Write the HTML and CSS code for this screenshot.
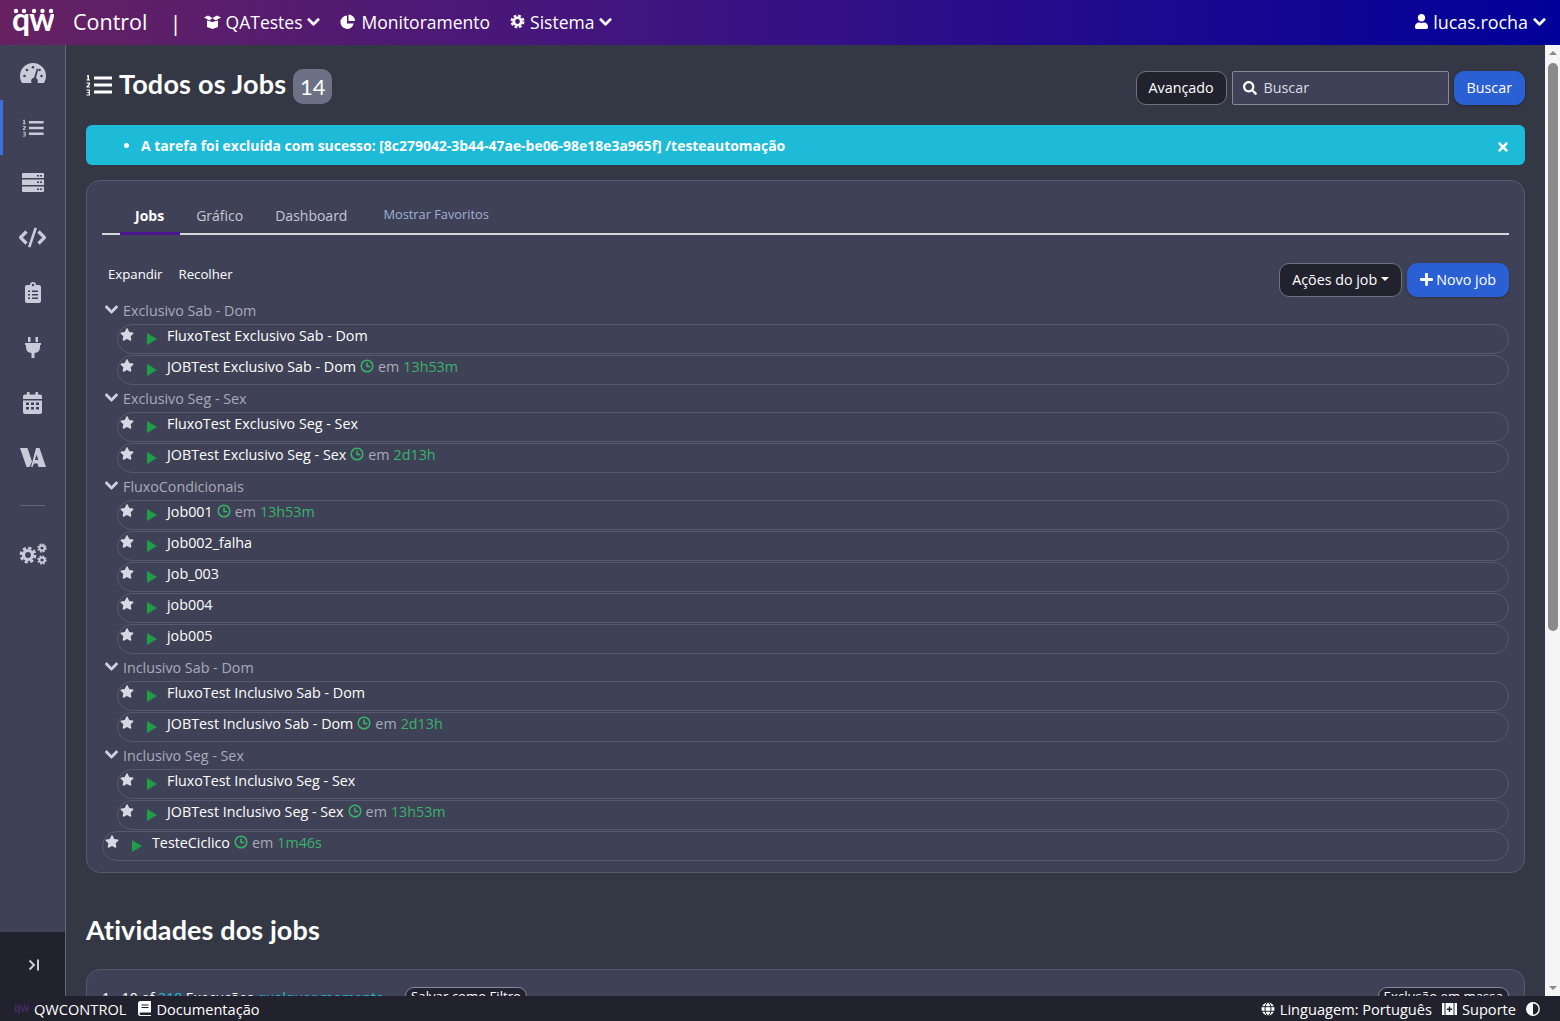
FILE: index.html
```html
<!DOCTYPE html>
<html lang="pt">

<head>
  <meta charset="UTF-8">
  <meta name="viewport" content="width=device-width, initial-scale=1.0">
  <title>QW Control</title>
  <link rel="stylesheet" href="styles.css">
</head>

<body>

  <!-- Shared icons -->
  <svg class="icon-defs" width="0" height="0">
    <symbol id="i-star" viewBox="0 0 576 512"><path d="M259.3 17.8L194 150.2 47.9 171.5c-26.2 3.8-36.7 36.1-17.7 54.6l105.7 103-25 145.5c-4.5 26.3 23.2 46 46.4 33.7L288 439.6l130.7 68.7c23.2 12.2 50.9-7.4 46.4-33.7l-25-145.5 105.7-103c19-18.5 8.5-50.8-17.7-54.6L382 150.2 316.7 17.8c-11.7-23.6-45.6-23.9-57.4 0z"/></symbol>
    <symbol id="i-chevron" viewBox="0 0 448 512"><path d="M207.029 381.476L12.686 187.132c-9.373-9.373-9.373-24.569 0-33.941l22.667-22.667c9.357-9.357 24.522-9.375 33.901-.04L224 284.505l154.745-154.021c9.379-9.335 24.544-9.317 33.901.04l22.667 22.667c9.373 9.373 9.373 24.569 0 33.941L240.971 381.476c-9.373 9.372-24.569 9.372-33.942 0z"/></symbol>
    <symbol id="i-play" viewBox="0 0 10 12"><path d="M0 0l10 6-10 6z"/></symbol>
    <symbol id="i-clock" viewBox="0 0 14 14"><circle cx="7" cy="7" r="5.800" fill="none" stroke="currentColor" stroke-width="1.500"/><path d="M7 3.400V7.500H10.300" fill="none" stroke="currentColor" stroke-width="1.500"/></symbol>
    <symbol id="i-list" viewBox="0 0 26 22"><path d="M8 2.500h18v3H8zM8 9.500h18v3H8zM8 16.500h18v3H8z"/><path d="M1.500 1h1.500v4.500h1v1H.5v-1h1V2.500H.7zM.5 8.500h3.500v2.200L2 12.500h2v1H.5v-1.300l2-1.700V9.500h-2zM.5 15.500H4v6H.5v-1h2.300v-1.500H1.300v-1h1.500v-1.500H.5z"/></symbol>
    <symbol id="i-cog" viewBox="0 0 20 20"><circle cx="10" cy="10" r="5" fill="none" stroke="currentColor" stroke-width="3.600"/><circle cx="10" cy="10" r="7.800" fill="none" stroke="currentColor" stroke-width="3" stroke-dasharray="3.600 2.530"/></symbol>
  </svg>

  <header class="topbar">
    <svg class="logo" width="42" height="34" viewBox="0 0 42 34">
      <g fill="#fff"><circle cx="4" cy="5" r="2.200"/><circle cx="12" cy="5" r="2.200"/><circle cx="22" cy="5" r="2.200"/><circle cx="30.500" cy="5" r="2.200"/><circle cx="39" cy="5" r="2.200"/></g>
      <text class="logo-text" x="0" y="25">qw</text>
    </svg>
    <span class="brand">Control</span>
    <span class="brand-sep">|</span>
    <nav class="topnav">
      <a class="topnav-item">
        <svg width="17" height="14" viewBox="0 0 17 14" fill="#fff"><path d="M3 5.500l5.500 1.500 5.500-1.500v6.500l-5.500 2-5.500-2z"/><path d="M0 2.500L4 .5l4.500 2.500-3 2.500zM17 2.500L13 .5 8.500 3l3 2.500z"/></svg>
        QATestes
        <svg class="chev" width="13" height="14"><use href="#i-chevron"/></svg>
      </a>
      <a class="topnav-item">
        <svg width="16" height="16" viewBox="0 0 16 16" fill="#fff"><path d="M7 1.500a6.700 6.700 0 1 0 6.700 8H7z"/><path d="M8.500 .5a6.500 6.500 0 0 1 6.500 6.500H8.500z"/></svg>
        Monitoramento
      </a>
      <a class="topnav-item">
        <svg width="15" height="15" fill="#fff" color="#fff"><use href="#i-cog"/></svg>
        Sistema
        <svg class="chev" width="13" height="14"><use href="#i-chevron"/></svg>
      </a>
    </nav>
    <a class="topnav-item user-menu">
      <svg width="13" height="15" viewBox="0 0 448 512" fill="#fff"><path d="M224 256c70.700 0 128-57.300 128-128S294.700 0 224 0 96 57.300 96 128s57.300 128 128 128zm89.600 32h-16.700c-22.200 10.200-46.900 16-72.900 16s-50.600-5.800-72.900-16h-16.700C60.200 288 0 348.200 0 422.400V464c0 26.500 21.500 48 48 48h352c26.500 0 48-21.500 48-48v-41.600c0-74.200-60.200-134.400-134.400-134.400z"/></svg>
      lucas.rocha
      <svg class="chev" width="13" height="14"><use href="#i-chevron"/></svg>
    </a>
  </header>

  <div class="layout">

    <aside class="sidebar">
      <div class="side-items">
        <a class="side-item">
          <svg width="26" height="20" viewBox="0 0 26 20"><path d="M13 0a13 13 0 0 0-13 13c0 2.500.7 4.800 1.900 6.800.3.200.5.200.8.200h20.600c.3 0 .5 0 .8-.2A13 13 0 0 0 26 13 13 13 0 0 0 13 0z"/><g fill="#3f4256"><circle cx="4.500" cy="13" r="1.300"/><circle cx="7" cy="7" r="1.300"/><circle cx="13" cy="4.300" r="1.300"/><circle cx="21.500" cy="13" r="1.300"/><circle cx="19.500" cy="7" r="1.300"/><path d="M16.800 5.500l1.500.5-2.300 9a3.400 3.400 0 1 1-2-.3z"/></g></svg>
        </a>
        <a class="side-item active">
          <svg width="22" height="18"><use href="#i-list"/></svg>
        </a>
        <a class="side-item">
          <svg width="22" height="19" viewBox="0 0 22 19"><path d="M1 0h20a1 1 0 0 1 1 1v4H0V1a1 1 0 0 1 1-1zM0 6.500h22v5.500H0zM0 13.500h22V18a1 1 0 0 1-1 1H1a1 1 0 0 1-1-1z"/><g fill="#3f4256"><path d="M15 2h2v1.500h-2zM18 2h2v1.500h-2zM15 8.500h2V10h-2zM18 8.500h2V10h-2zM15 15.500h2V17h-2zM18 15.500h2V17h-2z"/></g></svg>
        </a>
        <a class="side-item">
          <svg width="27" height="21" viewBox="0 0 27 21"><path d="M7.500 4.500L1.500 10.500l6 6M19.500 4.500l6 6-6 6" fill="none" stroke="currentColor" stroke-width="3.200"/><path d="M15.500 .5l2.500.7L11.500 20.500 9 19.800z"/></svg>
        </a>
        <a class="side-item">
          <svg width="16" height="21" viewBox="0 0 16 21"><path d="M2 3h3a3 3 0 0 1 6 0h3a2 2 0 0 1 2 2v14a2 2 0 0 1-2 2H2a2 2 0 0 1-2-2V5a2 2 0 0 1 2-2z"/><g fill="#3f4256"><circle cx="8" cy="3" r="1.200"/><path d="M3 8.500h2V10H3zM7 8.500h6V10H7zM3 12h2v1.500H3zM7 12h6v1.500H7zM3 15.500h2V17H3zM7 15.500h6V17H7z"/></g></svg>
        </a>
        <a class="side-item">
          <svg width="16" height="21" viewBox="0 0 16 21"><path d="M3 0h2.500v5H3zM10.500 0H13v5h-2.500zM0 6h16v2h-1v2.500a6 6 0 0 1-5.500 5.500v5h-3v-5A6 6 0 0 1 1 10.500V8H0z"/></svg>
        </a>
        <a class="side-item">
          <svg width="19" height="22" viewBox="0 0 19 22"><path d="M4 0h2.500v2.500h6V0H15v2.500h2a2 2 0 0 1 2 2V7H0V4.500a2 2 0 0 1 2-2h2zM0 8.500h19V20a2 2 0 0 1-2 2H2a2 2 0 0 1-2-2z"/><g fill="#3f4256"><path d="M3 10.500h3V13H3zM8 10.500h3V13H8zM13 10.500h3V13h-3zM3 15h3v2.500H3zM8 15h3v2.500H8zM13 15h3v2.500h-3z"/></g></svg>
        </a>
        <a class="side-item">
          <svg width="26" height="19" viewBox="0 0 26 19"><path d="M0 0h7.500l4.500 13.500L9.500 19H6.500zM16 0h3.500L26 19h-7.500l-1-3.500H14l-1.500 3.500H11zM16.500 6.500L15 12h3.300z" fill-rule="evenodd"/></svg>
        </a>
        <div class="side-divider"></div>
        <a class="side-item">
          <svg width="28" height="22" viewBox="0 0 28 22"><use href="#i-cog" x="0" y="3" width="18" height="18"/><use href="#i-cog" x="18" y="0" width="10" height="10"/><use href="#i-cog" x="18" y="12" width="10" height="10"/></svg>
        </a>
      </div>
      <div class="side-toggle">
        <svg width="12" height="12" viewBox="0 0 12 12"><path d="M1.500 1.500L6 6l-4.500 4.500" fill="none" stroke="currentColor" stroke-width="2"/><path d="M9 .5h2v11H9z"/></svg>
      </div>
    </aside>

    <main class="content">

      <div class="page-head">
        <h1 class="page-title">
          <svg width="26" height="22" fill="#fff"><use href="#i-list"/></svg>
          <span class="title-text">Todos os Jobs</span>
          <span class="count-badge">14</span>
        </h1>
        <div class="search-bar">
          <button class="btn btn-dark">Avançado</button>
          <div class="search-input">
            <svg width="14" height="14" viewBox="0 0 512 512" fill="#fff"><path d="M505 442.700L405.300 343c-4.500-4.500-10.600-7-17-7H372c27.600-35.300 44-79.700 44-128C416 93.100 322.900 0 208 0S0 93.100 0 208s93.100 208 208 208c48.300 0 92.700-16.400 128-44v16.300c0 6.400 2.500 12.500 7 17l99.700 99.700c9.400 9.400 24.600 9.400 33.900 0l28.300-28.300c9.400-9.400 9.400-24.600.1-34zM208 336c-70.700 0-128-57.200-128-128 0-70.700 57.200-128 128-128 70.700 0 128 57.200 128 128 0 70.700-57.200 128-128 128z"/></svg>
            Buscar
          </div>
          <button class="btn btn-blue">Buscar</button>
        </div>
      </div>

      <div class="alert">
        <ul class="alert-list">
          <li>A tarefa foi excluída com sucesso: [8c279042-3b44-47ae-be06-98e18e3a965f] /testeautomação</li>
        </ul>
        <svg class="alert-close" width="10" height="14" viewBox="0 0 352 512" fill="#fff"><path d="M242.720 256l100.070-100.070c12.280-12.280 12.280-32.190 0-44.480l-22.240-22.240c-12.280-12.280-32.190-12.280-44.480 0L176 189.280 75.930 89.210c-12.280-12.280-32.190-12.280-44.480 0L9.210 111.450c-12.280 12.280-12.280 32.190 0 44.480L109.280 256 9.210 356.070c-12.280 12.280-12.280 32.190 0 44.480l22.240 22.240c12.280 12.280 32.200 12.280 44.480 0L176 322.720l100.070 100.070c12.280 12.280 32.200 12.280 44.480 0l22.240-22.240c12.280-12.280 12.280-32.190 0-44.480L242.720 256z"/></svg>
      </div>

      <section class="card">
        <div class="tabs">
          <a class="tab active">Jobs</a>
          <a class="tab">Gráfico</a>
          <a class="tab">Dashboard</a>
          <a class="tab tab-fav">Mostrar Favoritos</a>
        </div>

        <div class="job-actions">
          <div class="tree-links">
            <a>Expandir</a>
            <a>Recolher</a>
          </div>
          <div class="action-btns">
            <button class="btn btn-dark">Ações do job <span class="caret"></span></button>
            <button class="btn btn-blue">
              <svg width="13" height="15" viewBox="0 0 448 512" fill="#fff"><path d="M416 208H272V64c0-17.670-14.330-32-32-32h-32c-17.670 0-32 14.330-32 32v144H32c-17.670 0-32 14.330-32 32v32c0 17.670 14.330 32 32 32h144v144c0 17.670 14.330 32 32 32h32c17.670 0 32-14.330 32-32V304h144c17.670 0 32-14.330 32-32v-32c0-17.670-14.330-32-32-32z"/></svg>
              Novo job
            </button>
          </div>
        </div>

        <div class="group">
          <div class="group-name"><svg width="13" height="15"><use href="#i-chevron"/></svg>Exclusivo Sab - Dom</div>
          <div class="job-row">
            <svg class="star" width="14" height="13"><use href="#i-star"/></svg>
            <svg class="play" width="10" height="12"><use href="#i-play"/></svg>
            <span class="job-name">FluxoTest Exclusivo Sab - Dom</span>
          </div>
          <div class="job-row">
            <svg class="star" width="14" height="13"><use href="#i-star"/></svg>
            <svg class="play" width="10" height="12"><use href="#i-play"/></svg>
            <span class="job-name">JOBTest Exclusivo Sab - Dom</span>
            <span class="next-run"><svg width="14" height="14"><use href="#i-clock"/></svg> <em>em</em> 13h53m</span>
          </div>
        </div>

        <div class="group">
          <div class="group-name"><svg width="13" height="15"><use href="#i-chevron"/></svg>Exclusivo Seg - Sex</div>
          <div class="job-row">
            <svg class="star" width="14" height="13"><use href="#i-star"/></svg>
            <svg class="play" width="10" height="12"><use href="#i-play"/></svg>
            <span class="job-name">FluxoTest Exclusivo Seg - Sex</span>
          </div>
          <div class="job-row">
            <svg class="star" width="14" height="13"><use href="#i-star"/></svg>
            <svg class="play" width="10" height="12"><use href="#i-play"/></svg>
            <span class="job-name">JOBTest Exclusivo Seg - Sex</span>
            <span class="next-run"><svg width="14" height="14"><use href="#i-clock"/></svg> <em>em</em> 2d13h</span>
          </div>
        </div>

        <div class="group">
          <div class="group-name"><svg width="13" height="15"><use href="#i-chevron"/></svg>FluxoCondicionais</div>
          <div class="job-row">
            <svg class="star" width="14" height="13"><use href="#i-star"/></svg>
            <svg class="play" width="10" height="12"><use href="#i-play"/></svg>
            <span class="job-name">Job001</span>
            <span class="next-run"><svg width="14" height="14"><use href="#i-clock"/></svg> <em>em</em> 13h53m</span>
          </div>
          <div class="job-row">
            <svg class="star" width="14" height="13"><use href="#i-star"/></svg>
            <svg class="play" width="10" height="12"><use href="#i-play"/></svg>
            <span class="job-name">Job002_falha</span>
          </div>
          <div class="job-row">
            <svg class="star" width="14" height="13"><use href="#i-star"/></svg>
            <svg class="play" width="10" height="12"><use href="#i-play"/></svg>
            <span class="job-name">Job_003</span>
          </div>
          <div class="job-row">
            <svg class="star" width="14" height="13"><use href="#i-star"/></svg>
            <svg class="play" width="10" height="12"><use href="#i-play"/></svg>
            <span class="job-name">job004</span>
          </div>
          <div class="job-row">
            <svg class="star" width="14" height="13"><use href="#i-star"/></svg>
            <svg class="play" width="10" height="12"><use href="#i-play"/></svg>
            <span class="job-name">job005</span>
          </div>
        </div>

        <div class="group">
          <div class="group-name"><svg width="13" height="15"><use href="#i-chevron"/></svg>Inclusivo Sab - Dom</div>
          <div class="job-row">
            <svg class="star" width="14" height="13"><use href="#i-star"/></svg>
            <svg class="play" width="10" height="12"><use href="#i-play"/></svg>
            <span class="job-name">FluxoTest Inclusivo Sab - Dom</span>
          </div>
          <div class="job-row">
            <svg class="star" width="14" height="13"><use href="#i-star"/></svg>
            <svg class="play" width="10" height="12"><use href="#i-play"/></svg>
            <span class="job-name">JOBTest Inclusivo Sab - Dom</span>
            <span class="next-run"><svg width="14" height="14"><use href="#i-clock"/></svg> <em>em</em> 2d13h</span>
          </div>
        </div>

        <div class="group">
          <div class="group-name"><svg width="13" height="15"><use href="#i-chevron"/></svg>Inclusivo Seg - Sex</div>
          <div class="job-row">
            <svg class="star" width="14" height="13"><use href="#i-star"/></svg>
            <svg class="play" width="10" height="12"><use href="#i-play"/></svg>
            <span class="job-name">FluxoTest Inclusivo Seg - Sex</span>
          </div>
          <div class="job-row">
            <svg class="star" width="14" height="13"><use href="#i-star"/></svg>
            <svg class="play" width="10" height="12"><use href="#i-play"/></svg>
            <span class="job-name">JOBTest Inclusivo Seg - Sex</span>
            <span class="next-run"><svg width="14" height="14"><use href="#i-clock"/></svg> <em>em</em> 13h53m</span>
          </div>
        </div>

        <div class="job-row job-row-root">
          <svg class="star" width="14" height="13"><use href="#i-star"/></svg>
          <svg class="play" width="10" height="12"><use href="#i-play"/></svg>
          <span class="job-name">TesteCiclico</span>
          <span class="next-run"><svg width="14" height="14"><use href="#i-clock"/></svg> <em>em</em> 1m46s</span>
        </div>
      </section>

      <h2 class="section-title">Atividades dos jobs</h2>

      <section class="card card-activity">
        <div class="activity-head">
          <span class="activity-count">1 - 10 of <a>218</a> Execuções <a>qualquer momento <span class="caret"></span></a></span>
          <button class="btn-pill">Salvar como Filtro</button>
          <button class="btn-pill btn-pill-right">Exclusão em massa</button>
        </div>
      </section>

    </main>

    <!-- Browser style scrollbar -->
    <div class="scrollbar">
      <span class="scroll-up"></span>
      <div class="scroll-track"><div class="scroll-thumb"></div></div>
      <span class="scroll-down"></span>
    </div>
  </div>

  <footer class="footer">
    <svg width="15" height="12" viewBox="0 0 42 34">
      <g fill="#4a2a66"><circle cx="4" cy="5" r="2.200"/><circle cx="12" cy="5" r="2.200"/><circle cx="22" cy="5" r="2.200"/><circle cx="30.500" cy="5" r="2.200"/><circle cx="39" cy="5" r="2.200"/></g>
      <text class="logo-text logo-text-dim" x="0" y="25">qw</text>
    </svg>
    <a class="foot-link foot-brand">QWCONTROL</a>
    <a class="foot-link foot-docs">
      <svg width="13" height="15" viewBox="0 0 13 15" fill="#fff"><path d="M2.500 0H13v11.500H2.500a1.300 1.300 0 0 0 0 2.500H13v1H2.500A2.500 2.500 0 0 1 0 12.500v-10A2.500 2.500 0 0 1 2.500 0z"/><path d="M3.500 3.500h7v1h-7zM3.500 6h7v1h-7z" fill="#22222e"/></svg>
      Documentação
    </a>
    <div class="foot-right">
      <a class="foot-link">
        <svg width="14" height="14" viewBox="0 0 14 14" fill="none"><circle cx="7" cy="7" r="6.500" fill="#fff"/><g stroke="#22222e" stroke-width="1"><path d="M0 4.700h14M0 9.300h14"/><ellipse cx="7" cy="7" rx="3" ry="6.500"/></g></svg>
        Linguagem: Português
      </a>
      <a class="foot-link">
        <svg width="15" height="14" viewBox="0 0 15 14" fill="#fff"><path d="M0 1h2.500v12H0zM12.500 1H15v12h-2.500zM3.500 1h8v12h-8z"/><path d="M6.800 4.500h1.400v2h2v1.400h-2v2H6.800v-2h-2V6.500h2z" fill="#22222e"/></svg>
        Suporte
      </a>
      <svg width="14" height="14" viewBox="0 0 14 14"><circle cx="7" cy="7" r="6.200" fill="#22222e" stroke="#fff" stroke-width="1.400"/><path d="M7 .5a6.500 6.500 0 0 0 0 13z" fill="#fff"/></svg>
    </div>
  </footer>

</body>

</html>
```

FILE: styles.css
```css
* {
  box-sizing: border-box;
}

html,
body {
  height: 100%;
}

body {
  margin: 0;
  display: flex;
  flex-direction: column;
  overflow: hidden;
  font-family: "Open Sans", "Noto Sans", sans-serif;
  font-size: 14.3px;
  color: white;
  background-color: #343744;
}

a {
  color: inherit;
  text-decoration: none;
}

button {
  font-family: inherit;
}

.icon-defs {
  position: absolute;
}

.logo-text {
  font-family: "Lato", sans-serif;
  font-size: 32px;
  font-weight: 700;
  letter-spacing: -1px;
  fill: white;
}

.logo-text-dim {
  fill: #4a2a66;
}

/* Top bar */
.topbar {
  flex: none;
  height: 45px;
  display: flex;
  align-items: center;
  padding: 0 14px 2px 12px;
  background: linear-gradient(to right, #662261, #3f1480 42%, #00009a);
  font-size: 17.5px;
}

.logo {
  flex: none;
  margin-top: 2px;
}

.brand {
  margin-left: 19px;
  font-size: 21.5px;
}

.brand-sep {
  margin-left: 22px;
  font-size: 22px;
}

.topnav {
  display: flex;
  gap: 20px;
  margin-left: 22px;
}

.topnav-item {
  display: flex;
  align-items: center;
  gap: 5px;
}

.chev {
  fill: white;
  stroke: white;
  stroke-width: 24;
}

.user-menu {
  margin-left: auto;
  font-size: 17.9px;
}

/* Layout */
.layout {
  flex: 1;
  min-height: 0;
  display: flex;
}

.sidebar {
  flex: none;
  width: 66px;
  display: flex;
  flex-direction: column;
  justify-content: space-between;
  background-color: #3f4256;
  border-right: 1px solid #62657a;
}

.side-item {
  height: 55px;
  display: flex;
  align-items: center;
  justify-content: center;
  color: #c9cbd9;
}

.side-item svg {
  fill: currentColor;
}

.side-item.active {
  box-shadow: inset 3px 0 0 #3d6fe0;
}

.side-divider {
  width: 25px;
  height: 1px;
  margin: 20px auto 20px;
  background-color: #62657a;
}

.side-toggle {
  height: 64px;
  display: flex;
  align-items: center;
  justify-content: center;
  padding: 2px 0 0 2px;
  color: #c9cbd9;
  background-color: #22222e;
}

.side-toggle svg {
  fill: currentColor;
}

.content {
  flex: 1;
  min-width: 0;
  overflow: hidden;
  padding: 24px 20px 0;
}

/* Page head */
.page-head {
  height: 36px;
  display: flex;
  align-items: flex-start;
  justify-content: space-between;
  margin-bottom: 20px;
}

.page-title {
  height: 35px;
  display: flex;
  align-items: center;
  gap: 7px;
  margin: 0;
  font-family: "Lato", sans-serif;
  font-size: 27px;
  font-weight: 700;
}

.title-text {
  margin-bottom: 6px;
  letter-spacing: 0.2px;
}

.page-title svg {
  margin-bottom: 4px;
}

.count-badge {
  display: inline-flex;
  align-items: center;
  justify-content: center;
  width: 39px;
  height: 35px;
  border-radius: 10px;
  font-size: 22px;
  font-weight: 400;
  background-color: #6c7186;
}

.search-bar {
  display: flex;
  align-items: center;
  gap: 5px;
  margin-top: 2px;
}

.btn {
  display: inline-flex;
  align-items: center;
  gap: 3px;
  height: 34px;
  padding: 0 12px 2px;
  font-size: 14.3px;
  color: white;
  border: 1px solid #6f7186;
  border-radius: 10px;
  cursor: pointer;
}

.btn-dark {
  background-color: #22222e;
}

.btn-blue {
  background-color: #2b5fd4;
  border-color: #2b5fd4;
  box-shadow: 0 1px 3px rgba(0, 0, 0, 0.3);
}

.caret {
  display: inline-block;
  margin-left: 1px;
  border-top: 4px solid currentColor;
  border-left: 4px solid transparent;
  border-right: 4px solid transparent;
  vertical-align: middle;
}

.search-input {
  width: 217px;
  height: 34px;
  display: flex;
  align-items: center;
  gap: 7px;
  padding: 0 10px 1px;
  color: #dcdde4;
  background-color: #3f4256;
  border: 1px solid #85889b;
  border-radius: 2px;
}

/* Alert */
.alert {
  position: relative;
  height: 40px;
  display: flex;
  align-items: center;
  margin-bottom: 15px;
  font-size: 13.95px;
  font-weight: 700;
  background-color: #1dbbd8;
  border-radius: 6px;
}

.alert-list {
  margin: 0;
  padding-left: 55px;
}

.alert-close {
  position: absolute;
  right: 17px;
  top: 15px;
}

/* Cards */
.card {
  padding: 14px 15px 11px;
  background-color: #3f4256;
  border: 1px solid #565970;
  border-radius: 14px;
}

.tabs {
  height: 40px;
  display: flex;
  padding-left: 18px;
  font-size: 14px;
  border-bottom: 2px solid #d8d8d8;
}

.tab {
  padding: 11px 16px 0;
  height: 40px;
  color: #c5c7d4;
}

.tab.active {
  font-weight: 700;
  color: white;
  border-bottom: 3px solid #4a1590;
  padding: 11px 16px 0 15px;
}

.tab-fav {
  padding: 10px 20px 0;
  font-size: 12.800px;
  color: #9fb0d8;
}

.job-actions {
  height: 34px;
  display: flex;
  justify-content: space-between;
  margin-top: 28px;
  margin-bottom: 1px;
}

.tree-links {
  display: flex;
  gap: 16px;
  padding: 2px 0 0 6px;
  font-size: 13.2px;
}

.action-btns {
  display: flex;
  gap: 5px;
}

.group-name {
  height: 26px;
  display: flex;
  align-items: center;
  gap: 5px;
  padding: 0 0 2px 3px;
  color: #a9abb9;
}

.group-name svg {
  fill: #d0d1dc;
  stroke: #d0d1dc;
  stroke-width: 24;
  margin-top: -2px;
}

.job-row {
  height: 30px;
  display: flex;
  align-items: center;
  margin: 0 0 1px 15px;
  padding-left: 2px;
  border: 1px solid #565970;
  border-radius: 15px;
}

.job-row-root {
  margin: 0;
}

.star {
  flex: none;
  fill: #d6d7e0;
  margin-top: -10px;
}

.play {
  flex: none;
  margin-left: 13px;
  fill: #1e9e45;
  margin-top: 0;
}

.job-name {
  margin-left: 10px;
  margin-top: -8px;
}

.next-run {
  display: flex;
  align-items: center;
  gap: 4px;
  margin-left: 4px;
  margin-top: -8px;
  color: #38b36a;
}

.next-run em {
  font-style: normal;
  color: #a9abb9;
}

.next-run svg {
  margin-top: -1px;
}

.section-title {
  height: 40px;
  margin: 37px 0 19px;
  font-family: "Lato", sans-serif;
  font-size: 27px;
  line-height: 40px;
  font-weight: 700;
  letter-spacing: 0.1px;
}

.card-activity {
  height: 80px;
  padding-top: 17px;
}

.activity-head {
  display: flex;
  align-items: flex-start;
  gap: 8px;
}

.activity-count {
  margin-top: 1px;
  font-size: 14px;
}

.activity-count a {
  color: #1dbbd8;
}

.btn-pill {
  height: 18px;
  padding: 0 5px;
  font-size: 13.2px;
  line-height: 16px;
  color: white;
  background-color: #22222e;
  border: 1px solid #85889b;
  border-radius: 9px 9px 0 0;
}

.btn-pill-right {
  margin-left: auto;
}

/* Scrollbar */
.scrollbar {
  flex: none;
  width: 15px;
  display: flex;
  flex-direction: column;
  align-items: center;
  background-color: #f5f5f5;
}

.scroll-up,
.scroll-down {
  flex: none;
  margin: 6px 0;
  border-left: 4px solid transparent;
  border-right: 4px solid transparent;
}

.scroll-up {
  border-bottom: 4px solid #8a8a8a;
}

.scroll-down {
  border-top: 4px solid #8a8a8a;
}

.scroll-track {
  flex: 1;
  width: 100%;
  display: flex;
  justify-content: center;
}

.scroll-thumb {
  width: 10px;
  height: 568px;
  margin-top: 2px;
  background-color: #8a8a8a;
  border-radius: 5px;
}

/* Footer */
.footer {
  flex: none;
  position: relative;
  height: 25px;
  display: flex;
  align-items: center;
  gap: 10px;
  padding: 0 20px 0 14px;
  font-size: 14.6px;
  font-weight: 500;
  background-color: #22222e;
}

.foot-link {
  display: flex;
  align-items: center;
  gap: 5px;
}

.foot-brand {
  margin-left: -5px;
}

.foot-docs {
  margin-left: 2px;
}

.foot-right {
  margin-left: auto;
  display: flex;
  align-items: center;
  gap: 10px;
}
```
